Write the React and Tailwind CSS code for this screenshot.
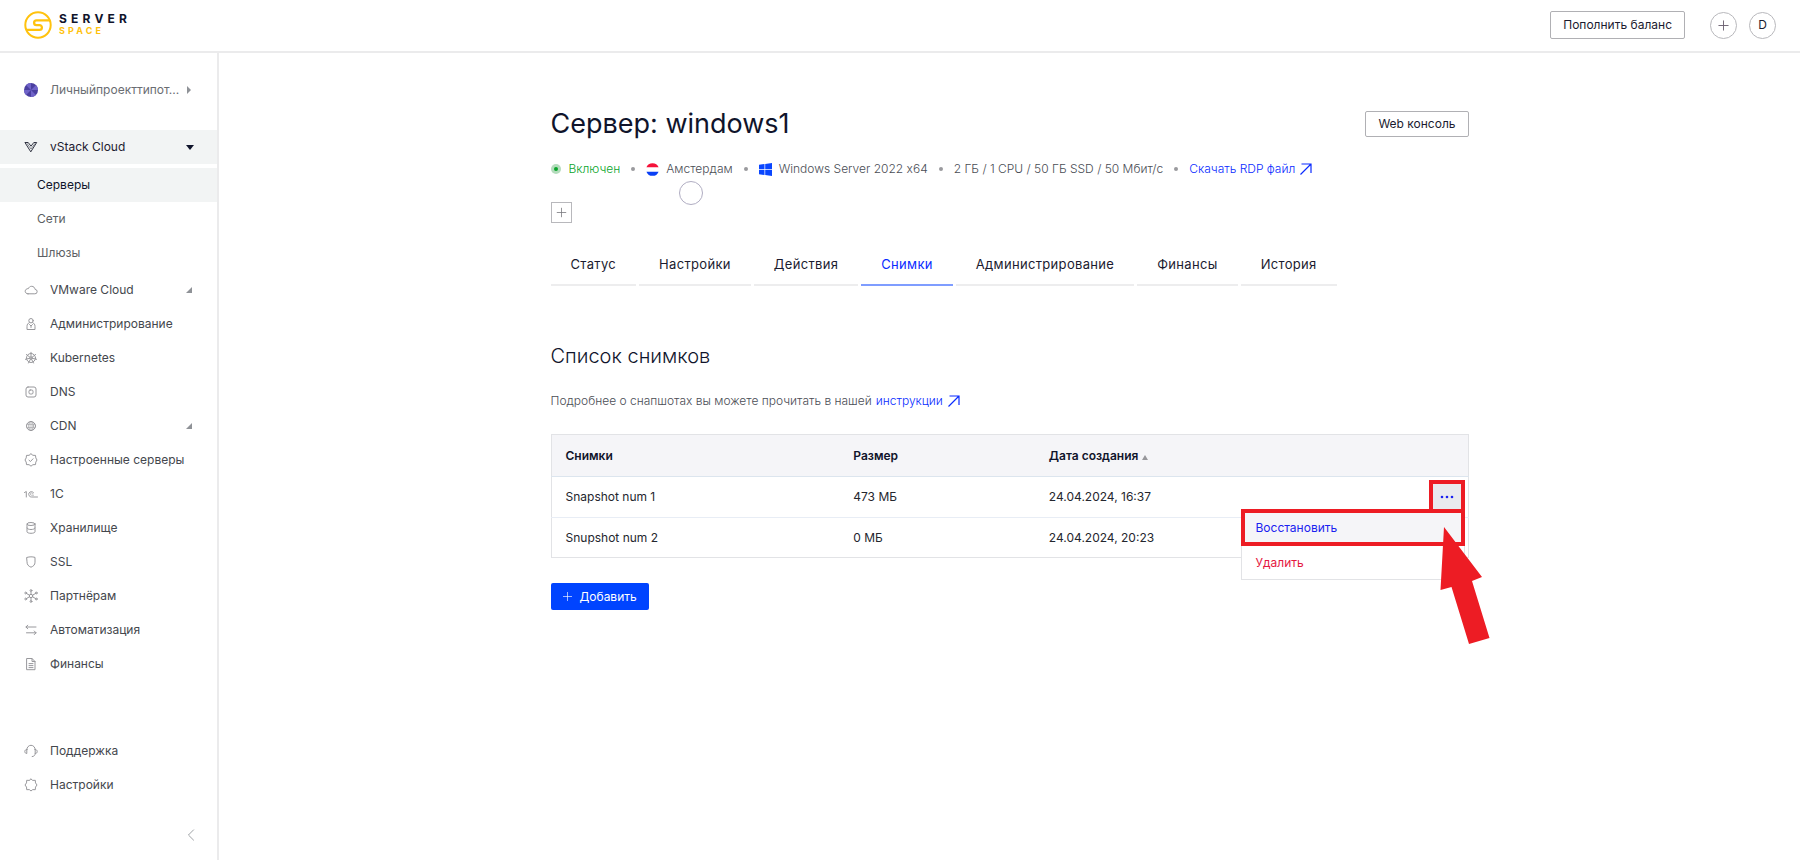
import React from "react";

const stroke = {
  fill: "none",
  stroke: "currentColor",
  strokeWidth: 1,
  strokeLinecap: "round",
  strokeLinejoin: "round",
};

function Icon({ children, className = "h-[14px] w-[14px]" }) {
  return (
    <svg viewBox="0 0 14 14" className={className} aria-hidden="true" {...stroke}>
      {children}
    </svg>
  );
}

const icons = {
  vstack: (
    <Icon>
      <path d="M1.300 2.500h2.900L7 6.200l2.800-3.700h2.900L7 11.500z" strokeWidth=".9" />
      <path d="M3 3.500 7 9l4-5.500" strokeWidth=".5" />
    </Icon>
  ),
  cloud: (
    <Icon>
      <path d="M4 10.800h6.800a2.200 2.200 0 0 0 .3-4.400C10.800 4.600 9.500 3.300 7.700 3.300 6 3.300 4.900 4.200 4.400 5.600 2.700 5.500 1.200 6.600 1.200 8.300c0 1.400 1.200 2.500 2.800 2.500z" />
    </Icon>
  ),
  admin: (
    <Icon>
      <circle cx="7" cy="3.700" r="2.200" />
      <path d="M5.300 5.500C3.800 6.500 3 7.500 3 9.500V12.500h8V9.500C11 7.500 10.200 6.500 8.700 5.500M5.500 7.500 7 9l1.500-1.500M7 9v1.500" />
    </Icon>
  ),
  kubernetes: (
    <Icon>
      <circle cx="7" cy="7" r="4.500" />
      <circle cx="7" cy="7" r="1.200" />
      <path d="M7 1.300v4.500M6.500 8.100 4.500 12M7.500 8.100l2 3.900M6 6.300 2.400 3.500M8 6.300l3.600-2.800M5.800 7.300l-4.400 1M8.200 7.300l4.400 1" />
    </Icon>
  ),
  dns: (
    <Icon>
      <rect x="2" y="2" width="10" height="10" rx="2" />
      <rect x="5" y="5" width="4" height="4" rx="1.200" />
    </Icon>
  ),
  cdn: (
    <Icon>
      <circle cx="7" cy="7" r="4.500" />
      <ellipse cx="7" cy="7" rx="2.200" ry="4.500" strokeWidth=".8" />
      <path d="M2.900 5.400h8.200M2.900 8.600h8.200M7 2.500v9" strokeWidth=".6" />
    </Icon>
  ),
  configured: (
    <Icon>
      <path d="M7 .8 8.900 2.300 11.500 2.400 11.800 4.900 13 7 11.800 9.100 11.500 11.600 8.900 11.700 7 13.200 5.100 11.700 2.500 11.600 2.200 9.100 1 7 2.200 4.900 2.500 2.400 5.100 2.300z" />
      <path d="m5 7.200 1.500 1.300L9 5.800" />
    </Icon>
  ),
  oneC: (
    <Icon>
      <path d="M.5 5.500 2.300 4.500V10M9.600 5.700A2.700 2.700 0 1 0 7.500 10H13.500" />
      <path d="M8.800 7.100a1.200 1.200 0 1 0-1.200 1.200h2" strokeWidth=".6" />
    </Icon>
  ),
  storage: (
    <Icon>
      <ellipse cx="7" cy="3" rx="4" ry="1.500" />
      <path d="M3 3v7.800c0 .9 1.900 1.500 4 1.500s4-.6 4-1.500V3M3 7c0 .9 1.900 1.500 4 1.500s4-.6 4-1.500" />
    </Icon>
  ),
  shield: (
    <Icon>
      <path d="M3 2.400c3-.8 5-.8 8 0v4.800C11 9.800 9.500 11.200 7 12.200 4.500 11.200 3 9.800 3 7.200z" />
    </Icon>
  ),
  partners: (
    <Icon>
      <circle cx="7" cy="7" r="1.700" />
      <circle cx="7" cy="1.500" r=".9" />
      <circle cx="7" cy="12.500" r=".9" />
      <circle cx="1.700" cy="4" r=".9" />
      <circle cx="12.300" cy="4" r=".9" />
      <circle cx="1.700" cy="10" r=".9" />
      <circle cx="12.300" cy="10" r=".9" />
      <path d="M7 2.500v2.800M7 8.700v2.800M2.500 4.500l3 1.700M11.500 4.500l-3 1.700M2.500 9.500l3-1.700M11.500 9.500l-3-1.700" />
    </Icon>
  ),
  automation: (
    <Icon>
      <path d="M3.700 2.200 2 4l1.700 1.800M2 4h10M10.300 8l1.700 1.800-1.700 1.800M12 9.800H2.500" />
    </Icon>
  ),
  finance: (
    <Icon>
      <path d="M3 1.500h5L11 4.500v8.200H3zM8 1.500v3h3M5 6.600h4M5 8.600h4M5 10.600h4" />
    </Icon>
  ),
  support: (
    <Icon>
      <path d="M2.800 5.500a4.200 4.200 0 0 1 8.400 0M2.800 5.500v4C1.600 9.500.8 8.700.8 7.500s.8-2 2-2zM11.200 5.500v4c1.200 0 2-.8 2-2s-.8-2-2-2zM11.200 9.500c0 1.700-1 2.900-3 3.100" />
    </Icon>
  ),
  settings: (
    <Icon>
      <path d="M7 1 8.700 2.400 11.300 2.300 11.500 4.900 13 7 11.500 9.100 11.300 11.700 8.700 11.600 7 13 5.300 11.600 2.700 11.700 2.500 9.100 1 7 2.500 4.900 2.700 2.300 5.300 2.400z" />
    </Icon>
  ),
};

const navItems = [
  { icon: "cloud", label: "VMware Cloud", nested: true },
  { icon: "admin", label: "Администрирование" },
  { icon: "kubernetes", label: "Kubernetes" },
  { icon: "dns", label: "DNS" },
  { icon: "cdn", label: "CDN", nested: true },
  { icon: "configured", label: "Настроенные серверы" },
  { icon: "oneC", label: "1C" },
  { icon: "storage", label: "Хранилище" },
  { icon: "shield", label: "SSL" },
  { icon: "partners", label: "Партнёрам" },
  { icon: "automation", label: "Автоматизация" },
  { icon: "finance", label: "Финансы" },
];

const bottomItems = [
  { icon: "support", label: "Поддержка" },
  { icon: "settings", label: "Настройки" },
];

const tabs = ["Статус", "Настройки", "Действия", "Снимки", "Администрирование", "Финансы", "История"];

function Logo() {
  return (
    <a href="#home" className="flex items-center gap-[7px]" aria-label="Serverspace">
      <svg viewBox="0 0 28 28" className="h-7 w-7" fill="none" stroke="#ffc20e" strokeWidth="2" aria-hidden="true">
        <circle cx="14" cy="14" r="12.700" />
        <path d="M26 9.300H12.500a2.400 2.400 0 0 0 0 4.800h3a2.400 2.400 0 0 1 0 4.800H2.500" strokeWidth="2.300" />
      </svg>
      <span className="flex flex-col font-bold">
        <span className="text-xs leading-3 tracking-[0.35em] text-[#10142b]">SERVER</span>
        <span className="text-[9px] leading-3 tracking-[0.35em] text-[#ffc20e]">SPACE</span>
      </span>
    </a>
  );
}

function Header() {
  return (
    <header className="flex h-[53px] items-center justify-between border-b-2 border-[#ebebec] px-6 pb-px">
      <Logo />
      <div className="flex items-center">
        <button className="mr-[25px] h-7 rounded-xs border border-[#b0b0b4] px-3 text-[#1b1b2f]">Пополнить баланс</button>
        <button aria-label="Создать" className="mr-3 flex h-[27px] w-[27px] items-center justify-center rounded-full border border-[#b8b8bc] text-[#6b6070]">
          <Icon className="h-[13px] w-[13px]">
            <path d="M7 2v10M2 7h10" />
          </Icon>
        </button>
        <button aria-label="Профиль" className="h-[27px] w-[27px] rounded-full border border-[#b8b8bc] text-[#1b1b2f]">D</button>
      </div>
    </header>
  );
}

function NavItem({ icon, label, nested }) {
  return (
    <li>
      <a href="#section" className="flex h-[34px] items-center px-6 text-[#44474d]">
        <span className="mr-3 text-[#98989c]">{icons[icon]}</span>
        <span className="flex-1">{label}</span>
        {nested && (
          <svg viewBox="0 0 6 6" className="mr-px h-[6px] w-[6px]" fill="#8f9297" aria-hidden="true">
            <path d="M6 0v6H0z" />
          </svg>
        )}
      </a>
    </li>
  );
}

function Sidebar() {
  return (
    <aside className="w-[219px] shrink-0 border-r-2 border-[#ebebec]">
      <button className="mt-5 flex h-[34px] w-full items-center px-6 text-left text-[#6a6d72]">
        <svg viewBox="0 0 14 14" className="mr-3 h-[14px] w-[14px] shrink-0" aria-hidden="true">
          <circle cx="7" cy="7" r="7" fill="#4a3fa0" />
          <path d="M7 7V0a7 7 0 0 0-5 2zM7 7h7a7 7 0 0 0-2-5zM7 7v7a7 7 0 0 0 5-2zM7 7H0a7 7 0 0 0 2 5z" fill="#6f63c8" />
        </svg>
        <span className="flex-1 whitespace-nowrap">Личныйпроекттипот...</span>
        <svg viewBox="0 0 4 8" className="mr-[2px] h-2 w-1" fill="#8f9297" aria-hidden="true">
          <path d="M0 0l4 4-4 4z" />
        </svg>
      </button>
      <nav className="mt-[23px]" aria-label="Разделы">
        <button className="flex h-[34px] w-full items-center bg-[#f2f4f4] px-6 text-left text-[#1d2030]">
          <span className="mr-3">{icons.vstack}</span>
          <span className="flex-1">vStack Cloud</span>
          <svg viewBox="0 0 8 5" className="-mr-px h-[5px] w-2" fill="#10142b" aria-hidden="true">
            <path d="M0 0h8L4 5z" />
          </svg>
        </button>
        <ul className="mt-1">
          {["Серверы", "Сети", "Шлюзы"].map((label, i) => (
            <li key={label}>
              <a
                href="#cloud"
                className={
                  i === 0
                    ? "flex h-[34px] items-center bg-[#f2f4f4] px-[37px] text-[#10142b]"
                    : "flex h-[34px] items-center px-[37px] text-[#5c5f64]"
                }
              >
                {label}
              </a>
            </li>
          ))}
        </ul>
        <ul className="mt-[3px]">
          {navItems.map((item) => (
            <NavItem key={item.label} {...item} />
          ))}
        </ul>
        <ul className="mt-[53px]">
          {bottomItems.map((item) => (
            <NavItem key={item.label} {...item} />
          ))}
        </ul>
      </nav>
      <div className="mt-[25px] flex justify-end pr-[18px]">
        <button aria-label="Свернуть меню" className="p-0.5 text-[#8f9297]">
          <Icon className="h-3 w-3">
            <path d="M10 1 4 7l6 6" />
          </Icon>
        </button>
      </div>
    </aside>
  );
}

function ArrowUpRight() {
  return (
    <svg viewBox="0 0 12 12" className="h-3 w-3" fill="none" stroke="currentColor" strokeWidth="1.200" aria-hidden="true">
      <path d="M.5 11.500 11 1M1.500 1H11v9" />
    </svg>
  );
}

function Dot() {
  return <span className="mx-[11px] h-1 w-1 rounded-full bg-[#9a9a9e]" />;
}

function ServerInfo() {
  return (
    <div className="relative mt-[15px] flex items-center font-light text-[#4a4d55]">
      <span className="mr-2 flex h-[10px] w-[10px] items-center justify-center rounded-full bg-[#b4dcbc]">
        <span className="h-1 w-1 rounded-full bg-[#0aa52c]" />
      </span>
      <span className="text-[#0aa52c]">Включен</span>
      <Dot />
      <svg viewBox="0 0 12 12" className="mr-[7px] h-[13px] w-[13px]" aria-hidden="true">
        <path d="M.4 4a6 6 0 0 1 11.200 0z" fill="#f5123a" />
        <path d="M.4 8a6 6 0 0 0 11.200 0z" fill="#0a3ff5" />
      </svg>
      <span>Амстердам</span>
      <Dot />
      <svg viewBox="0 0 13 13" className="mr-[7px] h-[13px] w-[13px]" fill="#0a46ff" aria-hidden="true">
        <path d="M0 1.800 5.500 1v5H0zM6.200.9 13 0v6H6.200zM0 6.800h5.500V12L0 11.200zM6.200 6.800H13V13l-6.800-.9z" />
      </svg>
      <span className="[font-variant-ligatures:no-contextual]">Windows Server 2022 x64</span>
      <Dot />
      <span>2 ГБ / 1 CPU / 50 ГБ SSD / 50 Мбит/с</span>
      <Dot />
      <a href="#rdp" className="flex items-center gap-[5px] text-[#0a2bff]">
        Скачать RDP файл
        <ArrowUpRight />
      </a>
      <span className="absolute top-[22px] left-32 h-6 w-6 rounded-full border border-[#b0adc2]" />
    </div>
  );
}

function SnapshotMenu() {
  return (
    <div className="absolute top-8 right-[3px] w-56 text-left" role="menu">
      <button role="menuitem" className="block h-[37px] w-full border-4 border-[#ed1c24] bg-[#f5f5f8] pl-[11px] text-left text-[#1a22f0]">
        Восстановить
      </button>
      <button role="menuitem" className="block h-[34px] w-full border border-t-0 border-[#e2e3e6] bg-white pl-[14px] text-left text-[#e5173f]">
        Удалить
      </button>
      <svg viewBox="0 0 50 118" className="absolute top-[18px] left-[199px] h-[118px] w-[50px]" fill="#ed1c24" aria-hidden="true">
        <path d="M4 0 42 50 32 54 49.500 111 29 117 11.500 60 .5 63z" />
      </svg>
    </div>
  );
}

function SnapshotTable() {
  return (
    <table className="mt-[23px] w-full table-fixed border border-[#e2e3e6] text-left text-[#24262e]">
      <colgroup>
        <col className="w-[31%]" />
        <col className="w-[21%]" />
        <col />
        <col className="w-20" />
      </colgroup>
      <thead>
        <tr className="h-[42px] border-b border-[#dce5ee] bg-[#f5f5f8] text-[#10142b]">
          <th className="pl-[14px] font-semibold">Снимки</th>
          <th className="pl-[18px] font-semibold">Размер</th>
          <th className="pl-[21px] font-semibold">
            <span className="flex items-center gap-1">
              Дата создания
              <svg viewBox="0 0 6 5" className="mt-1 h-[5px] w-[6px]" fill="#97979b" aria-hidden="true">
                <path d="M3 0l3 5H0z" />
              </svg>
            </span>
          </th>
          <th aria-label="Действия" />
        </tr>
      </thead>
      <tbody>
        <tr className="h-[41px] border-b border-[#e8edf5]">
          <td className="pl-[14px]">Snapshot num 1</td>
          <td className="pl-[18px]">473 МБ</td>
          <td className="pl-[21px]">24.04.2024, 16:37</td>
          <td className="relative pr-[3px]">
            <button
              aria-label="Действия со снимком"
              className="ml-auto flex h-[34px] w-9 items-center justify-center border-4 border-[#ed1c24] bg-[#e9eaee]"
            >
              <svg viewBox="0 0 14 4" className="h-1 w-[14px]" fill="#1a22f0" aria-hidden="true">
                <circle cx="2" cy="2" r="1.300" />
                <circle cx="7" cy="2" r="1.300" />
                <circle cx="12" cy="2" r="1.300" />
              </svg>
            </button>
            <SnapshotMenu />
          </td>
        </tr>
        <tr className="h-10">
          <td className="pl-[14px]">Snupshot num 2</td>
          <td className="pl-[18px]">0 МБ</td>
          <td className="pl-[21px]">24.04.2024, 20:23</td>
          <td />
        </tr>
      </tbody>
    </table>
  );
}

export default function App() {
  return (
    <div className="flex min-h-screen flex-col bg-white font-['Inter','Liberation_Sans',sans-serif] text-xs leading-5">
      <Header />
      <div className="flex flex-1">
        <Sidebar />
        <main className="min-w-0 flex-1">
          <div className="mx-auto max-w-[918px] pt-[51px]">
            <div className="flex items-center justify-between">
              <h1 className="text-[27px] leading-10 text-[#10142b]">Сервер: windows1</h1>
              <button className="h-[26px] rounded-xs border border-[#b0b0b4] px-3 text-[#1b1b2f]">Web консоль</button>
            </div>
            <ServerInfo />
            <button aria-label="Добавить метку" className="mt-[23px] flex h-[21px] w-[21px] items-center justify-center border border-[#b8b8bc] text-[#77777c]">
              <Icon className="h-[11px] w-[11px]">
                <path d="M7 1.500v11M1.500 7h11" />
              </Icon>
            </button>
            <nav className="mt-[21px] flex gap-[3px] text-[13px]" aria-label="Сервер">
              {tabs.map((tab) => (
                <a
                  key={tab}
                  href="#tab"
                  className={
                    tab === "Снимки"
                      ? "flex h-[42px] items-center border-b-2 border-[#7f9dff] px-5 tracking-wide text-[#0a2bff]"
                      : "flex h-[42px] items-center border-b-2 border-[#ededee] px-5 tracking-wide text-[#1b1b2f]"
                  }
                >
                  {tab}
                </a>
              ))}
            </nav>
            <h2 className="mt-[54px] text-xl leading-8 font-light text-[#10142b]">Список снимков</h2>
            <p className="mt-[19px] flex items-center gap-1 font-light text-[#4a4d55]">
              Подробнее о снапшотах вы можете прочитать в нашей
              <a href="#guide" className="flex items-center gap-[5px] text-[#0a2bff]">
                инструкции
                <ArrowUpRight />
              </a>
            </p>
            <SnapshotTable />
            <button className="mt-[25px] flex h-[27px] items-center gap-2 rounded-xs bg-[#0044ff] px-3 text-white">
              <Icon className="h-[9px] w-[9px]">
                <path d="M7 0v14M0 7h14" />
              </Icon>
              Добавить
            </button>
          </div>
        </main>
      </div>
    </div>
  );
}
